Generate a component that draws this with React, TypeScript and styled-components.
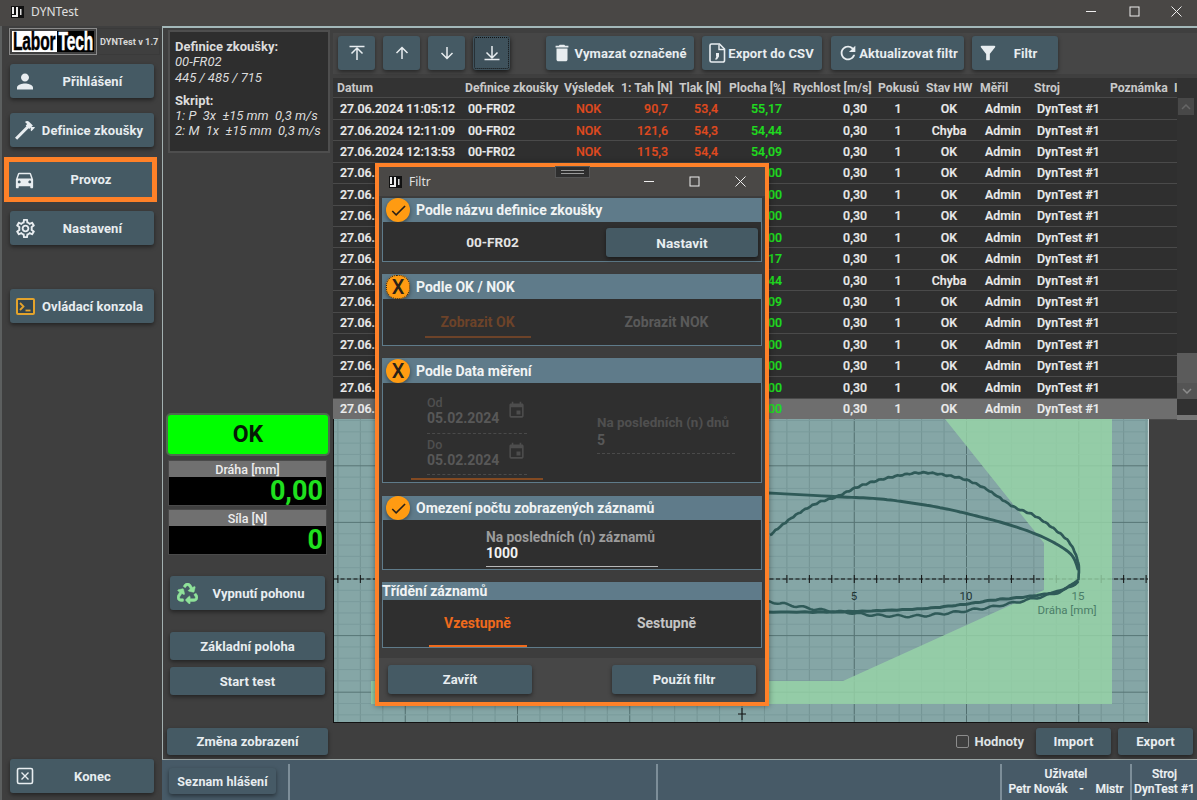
import React from "react";
import styled, { createGlobalStyle } from "styled-components";
import { MdPerson, MdDirectionsCar, MdOutlineSettings, MdDelete, MdRefresh, MdFilterAlt, MdEvent, MdCheck } from "react-icons/md";
import { FaRecycle } from "react-icons/fa";

const Global = createGlobalStyle`
  html, body { margin: 0; padding: 0; background: #3f3f3f; }
  * { box-sizing: border-box; }
  #root { width: 1197px; height: 800px; }
`;

const ORANGE = "#ff8128";
const FONT = `Roboto, "Liberation Sans", sans-serif`;

const Root = styled.div`
  position: relative; width: 1197px; height: 800px; overflow: hidden;
  display: flex; flex-direction: column; background: #3f3f3f;
  font-family: ${FONT}; color: #e6eaec;
`;
const TitleBar = styled.div`
  height: 26px; flex: none; display: flex; align-items: center; background: #494745;
  padding: 0 0 3px 11px;
`;
const TitleText = styled.span`
  font: 12px "Noto Sans", "Open Sans", sans-serif; color: #e0e0e0; margin-left: 7px;
`;
const WinControls = styled.div`margin-left: auto; display: flex; margin-right: -1px;`;
const DialogCtl = styled.div`margin-left: auto; display: flex; margin-right: 2px;`;
const WinBtn = styled.div<{ $w: number; $h: number }>`
  width: ${p => p.$w}px; height: ${p => p.$h}px; display: flex; align-items: center; justify-content: center;
`;
const Body = styled.div`flex: 1; display: flex; min-height: 0;`;
const Sidebar = styled.div`
  width: 162px; flex: none; display: flex; flex-direction: column; border-left: 2px solid #5c5f5f; padding-left: 8px;
`;
const LogoRow = styled.div`
  height: 27px; margin: 2px 0 9px -2px; width: 152px; display: flex; align-items: center;
  border: 1px solid #3a3a3a;
`;
const LogoBox = styled.div`
  display: flex; width: 88px; height: 27px; border: 1px solid #8a8a8a; padding: 2px; flex: none;
`;
const LogoPart = styled.div<{ $dark?: boolean }>`
  height: 100%; width: ${p => (p.$dark ? 37 : 45)}px; flex: none; display: flex; align-items: center; justify-content: center;
  background: ${p => (p.$dark ? "#000" : "#fff")}; color: ${p => (p.$dark ? "#fff" : "#000")};
`;
const LogoWord = styled.span`
  font: 700 25px "Liberation Sans", sans-serif; display: block; flex: none; width: max-content;
  transform: scaleX(0.62); letter-spacing: -0.2px; -webkit-text-stroke: 0.5px currentColor; white-space: nowrap;
`;
const Version = styled.span`font-size: 9.2px; font-weight: 700; color: #d8d8d8; margin-left: 3px; white-space: nowrap;`;

const Btn = styled.div<{ $w?: number; $h?: number }>`
  display: flex; align-items: center; justify-content: center; flex: none;
  width: ${p => (p.$w ? `${p.$w}px` : "auto")}; height: ${p => p.$h ?? 34}px;
  background: #455a64; border-radius: 3px; box-shadow: 0 2px 4px rgba(0, 0, 0, 0.45);
  font-size: 13px; font-weight: 700; color: #e8edf0; white-space: nowrap; letter-spacing: 0.1px;
`;
const NavBtn = styled(Btn)<{ $hl?: boolean }>`
  width: ${p => (p.$hl ? 143 : 144)}px; padding: 0 6px 0 3px; margin-bottom: 15px; justify-content: flex-start;
  ${p => p.$hl && `outline: 5px solid ${ORANGE}; margin-left: -1px; height: 35px; margin-bottom: 14px; box-shadow: none; border-radius: 0;`}
`;
const NavIcon = styled.span`width: 24px; height: 24px; display: flex; align-items: center; justify-content: center; flex: none;`;
const NavLabel = styled.span`flex: 1; text-align: center;`;
const NavSpacer = styled.div`height: 29px; flex: none;`;
const ExitBtn = styled(NavBtn)`margin-top: auto; margin-bottom: 7px;`;

const Workspace = styled.div`flex: 1; display: flex; flex-direction: column; min-width: 0;`;
const Main = styled.div`
  flex: 1; display: flex; min-height: 0; border-top: 2px solid #a3b8b9; border-left: 1px solid #a3b0b0; border-bottom: 1px solid #9aa5a5;
`;
const MiddleCol = styled.div`width: 170px; flex: none; display: flex; flex-direction: column;`;
const InfoPanel = styled.div`
  margin: 2px 0 0 5px; width: 162px; height: 123px; background: #2e2e2e; border: 2px solid #4e4e4e;
  padding: 7px 5px; font-size: 13px; line-height: 15.3px; color: #dcdcdc; flex: none;
`;
const InfoHead = styled.div<{ $gap?: boolean }>`font-weight: 700; margin-top: ${p => (p.$gap ? 8 : 0)}px;`;
const InfoLine = styled.div`font-style: italic; white-space: pre;`;
const StatusOk = styled.div`
  margin: 260px 0 0 3px; width: 164px; height: 43px; background: #00ff00; border: 2px solid #4f6b4f; border-radius: 5px;
  display: flex; align-items: center; justify-content: center; color: #061a06; font-size: 23px; font-weight: 700; flex: none;
`;
const Readout = styled.div<{ $mt: number }>`
  margin: ${p => p.$mt}px 0 0 5px; width: 159px; flex: none; border: 1px solid #4a4a4a;
`;
const ReadoutHead = styled.div`
  height: 16px; background: #707070; text-align: center; font-size: 12.5px; font-weight: 500; line-height: 17px; color: #eee;
`;
const ReadoutValue = styled.div`
  height: 28px; background: #000; color: #1fe01f; font-size: 27px; font-weight: 700; text-align: right; padding-right: 3px; line-height: 29px;
`;
const SideBtn = styled(Btn)<{ $mt: number; $ml?: number }>`
  margin: ${p => p.$mt}px 0 0 ${p => p.$ml ?? 7}px;
`;
const DriveBtn = styled(SideBtn)`padding-right: 6px; letter-spacing: 0;`;
const IconBtnLabel = styled.span`flex: 1; text-align: center;`;
const LeadIcon = styled.span<{ $pl?: number }>`display: flex; align-items: center; padding-left: ${p => p.$pl ?? 6}px; flex: none;`;

const RightCol = styled.div`flex: 1; display: flex; flex-direction: column; min-width: 0;`;
const Toolbar = styled.div`
  margin-top: 5px; height: 41px; flex: none; background: #464646; display: flex; padding: 3px 0 0 5px; gap: 8px;
`;
const SquareBtn = styled(Btn)<{ $focus?: boolean }>`
  width: 37px;
  ${p => p.$focus && `outline: 1px dotted #111; outline-offset: -2px; background: #3f525c; box-shadow: 0 2px 5px rgba(0,0,0,.7);`}
`;
const ToolBtn = styled(Btn)<{ $ml?: number }>`margin-left: ${p => p.$ml ?? 0}px; padding-right: 6px;`;
const TableWrap = styled.div`margin-top: 4px; display: flex; flex: none; height: 341px; background: #333;`;
const Table = styled.div`width: 844px; flex: none; display: flex; flex-direction: column;`;
const COLS = "128px 99px 57px 58px 50px 64px 85px 48px 54px 54px 76px 66px 1fr";
const HeadRow = styled.div`
  height: 20.4px; display: grid; grid-template-columns: ${COLS}; align-items: center; font-size: 12.2px; font-weight: 700; color: #c9c9c9;
  border-bottom: 1px solid #4a4a4a; white-space: nowrap; flex: none; padding-top: 1px;
`;
const HeadCell = styled.div`padding-left: 4px;`;
const HeadStub = styled.div`padding-left: 2px; overflow: visible;`;
const DataRow = styled.div<{ $sel?: boolean }>`
  height: 21.45px; flex: none; display: grid; grid-template-columns: ${COLS}; align-items: center; font-size: 12.4px; font-weight: 500;
  border-bottom: 1px solid #4a4a4a; white-space: nowrap; background: ${p => (p.$sel ? "#6e6e6e" : "#2f2f2f")}; color: #ececec;
  -webkit-text-stroke: 0.2px currentColor;
`;
const Cell = styled.div<{ $align?: string; $color?: string }>`
  text-align: ${p => p.$align ?? "left"}; color: ${p => p.$color ?? "inherit"};
  padding: 0 ${p => (p.$align === "right" ? 7 : 0)}px 0 ${p => (p.$align === "left" || !p.$align ? 7 : 0)}px;
`;
const EmptyCell = styled.div``;
const ScrollTrack = styled.div`flex: 1; display: flex; flex-direction: column; background: #313131; padding-top: 20px;`;
const ScrollUp = styled.div`height: 17px; background: #484848; display: flex; align-items: center; justify-content: center; flex: none; margin: 0 3px 0 1px;`;
const ScrollGap = styled.div`height: 238px; flex: none;`;
const ScrollThumb = styled.div`height: 30px; background: #5b5b5b; flex: none;`;
const ScrollDown = styled.div`height: 16px; background: #545454; display: flex; align-items: center; justify-content: center; flex: none;`;
const ScrollFoot = styled.div`margin-top: 16px; height: 5px; background: #777; flex: none;`;
const ChartRow = styled.div`height: 304px; flex: none; display: flex;`;
const ChartBox = styled.div`
  width: 816px; flex: none; border-left: 1px solid #111; border-bottom: 1px solid #111; border-right: 1px solid #c8d4d4; line-height: 0;
`;
const ChartText = styled.text<{ $faded?: boolean }>`
  font: 11.5px ${FONT}; fill: ${p => (p.$faded ? "#4b7d68" : "#1f3535")};
`;
const BottomBar = styled.div`
  flex: 1; display: flex; justify-content: flex-end; align-items: flex-start; padding: 5px 4px 0 0; gap: 7px;
`;
const CheckWrap = styled.div`display: flex; align-items: center; gap: 6px; height: 27px; margin-right: 5px; font-size: 13px; font-weight: 700; color: #dfe3e5;`;
const CheckBoxMark = styled.span`width: 13px; height: 13px; border: 1.5px solid #8c8c8c; border-radius: 2px; display: block;`;

const StatusBar = styled.div`
  height: 40px; flex: none; background: #475a67; display: flex; align-items: stretch; font-size: 12px; font-weight: 500; color: #eef2f4;
  -webkit-text-stroke: 0.2px currentColor;
`;
const StatusBtn = styled(Btn)`margin: 8px 0 0 7px; width: 107px; height: 26px; font-size: 12.5px; background: #465a66; -webkit-text-stroke: 0;`;
const StatusCell = styled.div<{ $w: number; $last?: boolean; $ml?: number }>`
  width: ${p => p.$w}px; flex: ${p => (p.$last ? 1 : "none")}; border-left: 2px solid #7d8e99; margin: 4px 0 0 ${p => p.$ml ?? 0}px;
  display: flex; flex-direction: column; align-items: center; justify-content: flex-start; line-height: 15px; padding-top: 2.5px; white-space: pre;
`;

const Dialog = styled.div`
  position: absolute; left: 375px; top: 163px; width: 394px; height: 543px; border: 4px solid ${ORANGE};
  background: #3d3d3d; display: flex; flex-direction: column; box-shadow: 0 0 6px rgba(0,0,0,.4);
`;
const DialogTitle = styled.div`
  height: 29px; flex: none; background: #4a4846; display: flex; align-items: center; padding-left: 10px;
`;
const Handle = styled.div`
  position: absolute; left: 176px; top: -1px; width: 35px; height: 12px; background: #2e2e2e; border: 1px solid #555;
  display: flex; flex-direction: column; gap: 2px; padding: 3px 5px 0;
`;
const HandleLine = styled.div`height: 1px; background: #9a9a9a;`;
const DialogBody = styled.div`flex: 1; display: flex; flex-direction: column; padding: 2px 3px 0;`;
const Section = styled.div<{ $mb?: number }>`margin-bottom: ${p => p.$mb ?? 12}px; flex: none;`;
const SectionHead = styled.div<{ $h: number }>`
  height: ${p => p.$h}px; background: #5f7b8a; display: flex; align-items: center; gap: 6px; padding-left: 4px;
  font-size: 14px; font-weight: 700; color: #f0f3f4; box-shadow: 0 1px 2px rgba(0,0,0,.2);
`;
const PlainHead = styled(SectionHead)`padding-left: 0;`;
const Toggle = styled.span<{ $focus?: boolean }>`
  width: 24px; height: 24px; border-radius: 50%; background: #ff9b12; color: #2a2118; flex: none; display: flex; align-items: center; justify-content: center;
  font-size: 20px; font-weight: 500; box-shadow: 0 2px 4px rgba(0,0,0,.4);
  ${p => p.$focus && `outline: 1px dotted #222; outline-offset: -1px; border-radius: 45%;`}
`;
const SectionBody = styled.div<{ $h: number }>`
  height: ${p => p.$h}px; background: #2f2f2f; border: 1px solid #5f7b8a; border-top: none; display: flex; position: relative;
`;
const NameValue = styled.div`
  flex: 1; display: flex; align-items: center; justify-content: center; font-size: 13.6px; font-weight: 700; color: #e4e4e4; padding-right: 4px;
`;
const SetBtn = styled(Btn)`margin: 6px 3px 0 0; font-size: 13.6px;`;
const Tab = styled.div<{ $color: string }>`
  width: 189px; position: relative; display: flex; justify-content: center; font-size: 14px; font-weight: 700; color: ${p => p.$color};
`;
const TabText = styled.div`height: 46px; display: flex; align-items: center;`;
const TabLine = styled.div<{ $color: string; $w: number; $bottom: number }>`
  position: absolute; left: 50%; margin-left: ${p => -p.$w / 2}px; bottom: ${p => p.$bottom}px;
  width: ${p => p.$w}px; height: 2px; background: ${p => p.$color};
`;
const DateCol = styled.div`width: 190px; flex: none; padding: 13px 0 0 44px; display: flex; flex-direction: column;`;
const Field = styled.div<{ $w: number; $h: number }>`
  width: ${p => p.$w}px; position: relative; height: ${p => p.$h}px; border-bottom: 1px dashed #4a4a4a; flex: none;
`;
const FieldLabel = styled.div<{ $color: string; $mt?: number; $strong?: boolean }>`
  font-size: ${p => (p.$strong ? 13.8 : 12.5)}px; line-height: 14px; font-weight: ${p => (p.$strong ? 700 : 500)}; color: ${p => p.$color}; white-space: nowrap;
  margin-top: ${p => p.$mt ?? 0}px;
`;
const WideLabel = styled(FieldLabel)`font-size: 13.4px; font-weight: 700;`;
const FieldValue = styled.div<{ $color: string; $mt?: number }>`
  font-size: 14px; line-height: 17px; font-weight: 700; color: ${p => p.$color}; margin-top: ${p => p.$mt ?? 0}px;
`;
const CalIcon = styled.span<{ $top: number }>`position: absolute; right: 1px; top: ${p => p.$top}px; color: #4d4d4d; display: flex;`;
const DateUnderline = styled.div`width: 132px; height: 2px; background: #834a22; margin: 3px 0 0 -16px; flex: none;`;
const RightField = styled.div`padding: 33px 0 0 24px;`;
const LimitField = styled.div`
  margin: 10px 0 0 103px; width: 172px; height: 37px; border-bottom: 1px solid #b8b8b8;
`;
const Footer = styled.div`
  height: 44px; margin: auto -3px 0; background: #474747; display: flex; justify-content: space-between; padding: 7px 9px 0; flex: none;
`;

function AppIcon() {
  return (
    <svg width="13" height="12" viewBox="0 0 13 12">
      <rect width="13" height="12" fill="#111" />
      <rect x="1" y="1" width="6" height="10" fill="#eee" />
      <rect x="3" y="1" width="2" height="7" fill="#111" />
      <rect x="1" y="8" width="4" height="1" fill="#111" />
      <rect x="9" y="3" width="1.5" height="6" fill="#ddd" />
    </svg>
  );
}
const Minus = () => <svg width="11" height="11" viewBox="0 0 11 11"><path d="M0 5.5H10" stroke="#eee" strokeWidth="1" /></svg>;
const Square = () => <svg width="11" height="11" viewBox="0 0 11 11"><rect x="1" y="1" width="9" height="9" fill="none" stroke="#eee" strokeWidth="1" /></svg>;
const Close = () => <svg width="11" height="11" viewBox="0 0 11 11"><path d="M.5.5L10.5 10.5M10.5.5L.5 10.5" stroke="#eee" strokeWidth="1" /></svg>;

const Hammer = () => (
  <svg width="24" height="24" viewBox="0 0 24 24" fill="#e8edf0">
    <path d="M2 19.63L13.43 8.2L12.72 7.5L14.14 6.07L12 3.89C13.2 2.7 15.09 2.7 16.27 3.89L19.87 7.5L18.45 8.91H21.29L22 9.62L18.45 13.21L17.74 12.5V9.62L16.27 11.04L15.56 10.33L4.13 21.76L2 19.63Z" />
  </svg>
);
const ExitIcon = () => (
  <svg width="18" height="18" viewBox="0 0 18 18" fill="none" stroke="#e8edf0">
    <rect x="1.5" y="1.5" width="15" height="15" rx="1.5" strokeWidth="1.6" />
    <path d="M5.5 5.5L12.5 12.5M12.5 5.5L5.5 12.5" strokeWidth="1.4" />
  </svg>
);
const ConsoleIcon = () => (
  <svg width="19" height="17" viewBox="0 0 19 17" fill="none">
    <rect x="1" y="1" width="17" height="15" rx="1" stroke="#e3a32c" strokeWidth="2" fill="#33454f" />
    <path d="M4 5L7.5 8.5L4 12" stroke="#e3a32c" strokeWidth="1.8" />
    <path d="M9.5 12.5H14.5" stroke="#e3a32c" strokeWidth="1.8" />
  </svg>
);
function ArrowIcon({ kind }: { kind: "top" | "up" | "down" | "bottom" }) {
  const st = { stroke: "#e8edf0", strokeWidth: 1.5, fill: "none" };
  return (
    <svg width="18" height="18" viewBox="0 0 18 18">
      {kind === "top" && <g {...st}><path d="M1.5 2.5H16.5" /><path d="M9 16V4M3.5 9.5L9 4L14.5 9.5" /></g>}
      {kind === "up" && <g {...st}><path d="M9 15V3.5M3.5 9L9 3.5L14.5 9" /></g>}
      {kind === "down" && <g {...st}><path d="M9 3V14.5M3.5 9L9 14.5L14.5 9" /></g>}
      {kind === "bottom" && <g {...st}><path d="M1.5 15.5H16.5" /><path d="M9 2V14M3.5 8.5L9 14L14.5 8.5" /></g>}
    </svg>
  );
}
const FileCsv = () => (
  <svg width="17" height="20" viewBox="0 0 17 20" fill="none">
    <path d="M2.5 1H10.5L15.5 6V17.5A1.5 1.5 0 0 1 14 19H2.5A1.5 1.5 0 0 1 1 17.5V2.5A1.5 1.5 0 0 1 2.5 1Z" stroke="#e8edf0" strokeWidth="1.6" />
    <path d="M10 1.5V6.5H15" stroke="#e8edf0" strokeWidth="1.4" />
    <path d="M7 10H10V13.5L8 16.5H6L7.5 13.5H7Z" fill="#e8edf0" />
  </svg>
);
const Chevron = ({ up }: { up?: boolean }) => (
  <svg width="10" height="6" viewBox="0 0 10 6"><path d={up ? "M1 5L5 1L9 5" : "M1 1L5 5L9 1"} fill="none" stroke={up ? "#666" : "#8c8c8c"} strokeWidth="1.5" /></svg>
);

type Pt = [number, number];
const z = (p: Pt): Pt => [760 + p[0] / 3, 400 + p[1] / 3];
function curve(zoomPts: Pt[], amp = 0, period = 20): string {
  const P = zoomPts.map(z);
  const out: string[] = [];
  let dist = 0;
  let prev: Pt | null = null;
  for (let i = 0; i < P.length - 1; i++) {
    const p0 = P[Math.max(0, i - 1)], p1 = P[i], p2 = P[i + 1], p3 = P[Math.min(P.length - 1, i + 2)];
    for (let s = 0; s < 10; s++) {
      const t = s / 10, t2 = t * t, t3 = t2 * t;
      const x = 0.5 * (2 * p1[0] + (p2[0] - p0[0]) * t + (2 * p0[0] - 5 * p1[0] + 4 * p2[0] - p3[0]) * t2 + (3 * p1[0] - p0[0] - 3 * p2[0] + p3[0]) * t3);
      const y = 0.5 * (2 * p1[1] + (p2[1] - p0[1]) * t + (2 * p0[1] - 5 * p1[1] + 4 * p2[1] - p3[1]) * t2 + (3 * p1[1] - p0[1] - 3 * p2[1] + p3[1]) * t3);
      if (prev) dist += Math.hypot(x - prev[0], y - prev[1]);
      prev = [x, y];
      const w = amp * Math.sin((dist / period) * Math.PI * 2);
      out.push(`${x.toFixed(1)},${(y + w).toFixed(1)}`);
    }
  }
  const last = P[P.length - 1];
  out.push(`${last[0]},${last[1]}`);
  return "M" + out.join("L");
}
const upperArc: Pt[] = [[30, 405], [100, 350], [170, 310], [230, 290], [290, 262], [350, 242], [420, 226], [490, 218], [560, 226], [620, 240], [680, 268], [760, 320], [820, 345], [880, 385], [930, 430], [955, 490], [955, 540]];
const returnArc: Pt[] = [[-10, 277], [230, 290], [350, 296], [450, 308], [550, 325], [650, 348], [750, 375], [850, 412], [930, 460], [955, 510]];
const lowerA: Pt[] = [[955, 540], [900, 572], [800, 590], [700, 600], [620, 612], [500, 625], [350, 632], [200, 636], [-10, 636]];
const lowerB: Pt[] = [[955, 545], [900, 575], [800, 600], [700, 620], [620, 632], [540, 642], [475, 648], [410, 648], [335, 645], [270, 638], [200, 632], [130, 622], [60, 610], [-10, 600]];

function Chart() {
  const X0 = 742, Y0 = 579, DX = 22.45, DY = 11.32;
  const vs = Array.from({ length: 37 }, (_, i) => i - 18);
  const hs = Array.from({ length: 28 }, (_, i) => i - 14);
  return (
    <svg width="814" height="303" viewBox="334 419 814 303">
      <rect x="334" y="419" width="814" height="303" fill="#85a6a6" />
      {vs.map(n => (
        <line key={n} x1={X0 + n * DX} x2={X0 + n * DX} y1="419" y2="723" stroke={n % 5 === 0 ? "#526f6f" : "#749494"} strokeWidth="1" />
      ))}
      {hs.map(k => (
        <line key={k} x1="334" x2="1148" y1={Y0 + k * DY} y2={Y0 + k * DY} stroke={k % 5 === 0 ? "#587676" : "#7a9b9c"} strokeWidth="1" />
      ))}
      <line x1="334" x2="1148" y1={Y0} y2={Y0} stroke="#111" strokeWidth="1" strokeDasharray="4 2.5" />
      {vs.map(n => (
        <line key={n} x1={X0 + n * DX} x2={X0 + n * DX} y1={Y0 - 4} y2={Y0 + 4} stroke="#111" strokeWidth="1" />
      ))}
      <path d="M738 714H746M742 708V720" stroke="#111" strokeWidth="1" />
      <ChartText x="854" y="600" textAnchor="middle">5</ChartText>
      <ChartText x="966" y="600" textAnchor="middle">10</ChartText>
      <path d="M945 419H1112V704H371V681H843L1044 590V543Z" fill="#97d4a7" fillOpacity="0.82" />
      <ChartText $faded x="1078" y="600" textAnchor="middle">15</ChartText>
      <ChartText $faded x="1067" y="614" textAnchor="middle">Dráha [mm]</ChartText>
      <g fill="none" stroke="#2f5a58" strokeLinejoin="round">
        <path d={curve(upperArc, 0.6, 9)} strokeWidth="2.7" />
        <path d={curve(returnArc)} strokeWidth="2.9" />
        <path d={curve(lowerA, 0.3, 14)} strokeWidth="3" />
        <path d={curve(lowerB, 1, 19)} strokeWidth="2.5" />
      </g>
    </svg>
  );
}

type RowData = { d: string; res?: string; tah?: string; tlak?: string; pl: string; hw: string; sel?: boolean; def?: string };
const RED = "#df4a1f", GREEN = "#1fdc1f";
const rows: RowData[] = [
  { d: "27.06.2024 11:05:12", def: "00-FR02", res: "NOK", tah: "90,7", tlak: "53,4", pl: "55,17", hw: "OK" },
  { d: "27.06.2024 12:11:09", def: "00-FR02", res: "NOK", tah: "121,6", tlak: "54,3", pl: "54,44", hw: "Chyba" },
  { d: "27.06.2024 12:13:53", def: "00-FR02", res: "NOK", tah: "115,3", tlak: "54,4", pl: "54,09", hw: "OK" },
  { d: "27.06.", pl: "00", hw: "OK" },
  { d: "27.06.", pl: "00", hw: "OK" },
  { d: "27.06.", pl: "00", hw: "OK" },
  { d: "27.06.", pl: "00", hw: "OK" },
  { d: "27.06.", pl: "17", hw: "OK" },
  { d: "27.06.", pl: "44", hw: "Chyba" },
  { d: "27.06.", pl: "09", hw: "OK" },
  { d: "27.06.", pl: "00", hw: "OK" },
  { d: "27.06.", pl: "00", hw: "OK" },
  { d: "27.06.", pl: "00", hw: "OK" },
  { d: "27.06.", pl: "00", hw: "OK" },
  { d: "27.06.", pl: "00", hw: "OK", sel: true },
];
const heads = ["Datum", "Definice zkoušky", "Výsledek", "1: Tah [N]", "Tlak [N]", "Plocha [%]", "Rychlost [m/s]", "Pokusů", "Stav HW", "Měřil", "Stroj", "Poznámka"];

export default function App() {
  return (
    <Root>
      <Global />
      <TitleBar>
        <AppIcon />
        <TitleText>DYNTest</TitleText>
        <WinControls>
          <WinBtn $w={42.5} $h={20}><Minus /></WinBtn>
          <WinBtn $w={42.5} $h={20}><Square /></WinBtn>
          <WinBtn $w={42.5} $h={20}><Close /></WinBtn>
        </WinControls>
      </TitleBar>
      <Body>
        <Sidebar>
          <LogoRow>
            <LogoBox>
              <LogoPart><LogoWord>Labor</LogoWord></LogoPart>
              <LogoPart $dark><LogoWord>Tech</LogoWord></LogoPart>
            </LogoBox>
            <Version>DYNTest v 1.7</Version>
          </LogoRow>
          <NavBtn><NavIcon><MdPerson size={25} /></NavIcon><NavLabel>Přihlášení</NavLabel></NavBtn>
          <NavBtn><NavIcon><Hammer /></NavIcon><NavLabel>Definice zkoušky</NavLabel></NavBtn>
          <NavBtn $hl><NavIcon><MdDirectionsCar size={23} /></NavIcon><NavLabel>Provoz</NavLabel></NavBtn>
          <NavBtn><NavIcon><MdOutlineSettings size={23} /></NavIcon><NavLabel>Nastavení</NavLabel></NavBtn>
          <NavSpacer />
          <NavBtn><NavIcon><ConsoleIcon /></NavIcon><NavLabel>Ovládací konzola</NavLabel></NavBtn>
          <ExitBtn><NavIcon><ExitIcon /></NavIcon><NavLabel>Konec</NavLabel></ExitBtn>
        </Sidebar>
        <Workspace>
          <Main>
            <MiddleCol>
              <InfoPanel>
                <InfoHead>Definice zkoušky:</InfoHead>
                <InfoLine>00-FR02</InfoLine>
                <InfoLine>445 / 485 / 715</InfoLine>
                <InfoHead $gap>Skript:</InfoHead>
                <InfoLine>1: P  3x  ±15 mm  0,3 m/s</InfoLine>
                <InfoLine>2: M  1x  ±15 mm  0,3 m/s</InfoLine>
              </InfoPanel>
              <StatusOk>OK</StatusOk>
              <Readout $mt={4}><ReadoutHead>Dráha [mm]</ReadoutHead><ReadoutValue>0,00</ReadoutValue></Readout>
              <Readout $mt={3}><ReadoutHead>Síla [N]</ReadoutHead><ReadoutValue>0</ReadoutValue></Readout>
              <DriveBtn $mt={21} $w={155}>
                <LeadIcon $pl={7}><FaRecycle size={21} color="#8fe29a" stroke="#8fe29a" strokeWidth={12} /></LeadIcon>
                <IconBtnLabel>Vypnutí pohonu</IconBtnLabel>
              </DriveBtn>
              <SideBtn $mt={22} $w={155} $h={28}>Základní poloha</SideBtn>
              <SideBtn $mt={7} $w={155} $h={28}>Start test</SideBtn>
              <SideBtn $mt={33} $ml={4} $w={161} $h={27}>Změna zobrazení</SideBtn>
            </MiddleCol>
            <RightCol>
              <Toolbar>
                <SquareBtn><ArrowIcon kind="top" /></SquareBtn>
                <SquareBtn><ArrowIcon kind="up" /></SquareBtn>
                <SquareBtn><ArrowIcon kind="down" /></SquareBtn>
                <SquareBtn $focus><ArrowIcon kind="bottom" /></SquareBtn>
                <ToolBtn $w={148} $ml={28}>
                  <LeadIcon $pl={5}><MdDelete size={22} /></LeadIcon>
                  <IconBtnLabel>Vymazat označené</IconBtnLabel>
                </ToolBtn>
                <ToolBtn $w={120}>
                  <LeadIcon $pl={7}><FileCsv /></LeadIcon>
                  <IconBtnLabel>Export do CSV</IconBtnLabel>
                </ToolBtn>
                <ToolBtn $w={133} $ml={1}>
                  <LeadIcon $pl={6}><MdRefresh size={22} /></LeadIcon>
                  <IconBtnLabel>Aktualizovat filtr</IconBtnLabel>
                </ToolBtn>
                <ToolBtn $w={86}>
                  <LeadIcon $pl={5}><MdFilterAlt size={22} /></LeadIcon>
                  <IconBtnLabel>Filtr</IconBtnLabel>
                </ToolBtn>
              </Toolbar>
              <TableWrap>
                <Table>
                  <HeadRow>
                    {heads.map(h => <HeadCell key={h}>{h}</HeadCell>)}
                    <HeadStub>I</HeadStub>
                  </HeadRow>
                  {rows.map((r, i) => (
                    <DataRow key={i} $sel={r.sel}>
                      <Cell>{r.d}</Cell>
                      <Cell>{r.def}</Cell>
                      <Cell $align="center" $color={RED}>{r.res}</Cell>
                      <Cell $align="right" $color={RED}>{r.tah}</Cell>
                      <Cell $align="right" $color={RED}>{r.tlak}</Cell>
                      <Cell $align="right" $color={GREEN}>{r.pl}</Cell>
                      <Cell $align="right">0,30</Cell>
                      <Cell $align="center">1</Cell>
                      <Cell $align="center">{r.hw}</Cell>
                      <Cell $align="center">Admin</Cell>
                      <Cell>DynTest #1</Cell>
                      <EmptyCell />
                      <EmptyCell />
                    </DataRow>
                  ))}
                </Table>
                <ScrollTrack>
                  <ScrollUp><Chevron up /></ScrollUp>
                  <ScrollGap />
                  <ScrollThumb />
                  <ScrollDown><Chevron /></ScrollDown>
                  <ScrollFoot />
                </ScrollTrack>
              </TableWrap>
              <ChartRow>
                <ChartBox><Chart /></ChartBox>
              </ChartRow>
              <BottomBar>
                <CheckWrap><CheckBoxMark />Hodnoty</CheckWrap>
                <Btn $w={75} $h={27}>Import</Btn>
                <Btn $w={75} $h={27}>Export</Btn>
              </BottomBar>
            </RightCol>
          </Main>
          <StatusBar>
            <StatusBtn>Seznam hlášení</StatusBtn>
            <StatusCell $w={368} $ml={12} />
            <StatusCell $w={344} />
            <StatusCell $w={130}>
              <span>Uživatel</span>
              <span>Petr Novák    -    Mistr</span>
            </StatusCell>
            <StatusCell $w={67} $last>
              <span>Stroj</span>
              <span>DynTest #1</span>
            </StatusCell>
          </StatusBar>
        </Workspace>
      </Body>
      <Dialog>
        <Handle><HandleLine /><HandleLine /></Handle>
        <DialogTitle>
          <AppIcon />
          <TitleText>Filtr</TitleText>
          <DialogCtl>
            <WinBtn $w={45.5} $h={29}><Minus /></WinBtn>
            <WinBtn $w={45.5} $h={29}><Square /></WinBtn>
            <WinBtn $w={45.5} $h={29}><Close /></WinBtn>
          </DialogCtl>
        </DialogTitle>
        <DialogBody>
          <Section>
            <SectionHead $h={24}><Toggle><MdCheck size={19} /></Toggle>Podle názvu definice zkoušky</SectionHead>
            <SectionBody $h={40}>
              <NameValue>00-FR02</NameValue>
              <SetBtn $w={152} $h={29}>Nastavit</SetBtn>
            </SectionBody>
          </Section>
          <Section>
            <SectionHead $h={25}><Toggle $focus>X</Toggle>Podle OK / NOK</SectionHead>
            <SectionBody $h={47}>
              <Tab $color="#6d4329"><TabText>Zobrazit OK</TabText><TabLine $w={106} $bottom={7} $color="#6d4329" /></Tab>
              <Tab $color="#5a5a5a"><TabText>Zobrazit NOK</TabText></Tab>
            </SectionBody>
          </Section>
          <Section $mb={13}>
            <SectionHead $h={25}><Toggle>X</Toggle>Podle Data měření</SectionHead>
            <SectionBody $h={100}>
              <DateCol>
                <Field $w={100} $h={38}>
                  <FieldLabel $color="#4f4f4f">Od</FieldLabel>
                  <FieldValue $color="#585858">05.02.2024</FieldValue>
                  <CalIcon $top={5}><MdEvent size={19} /></CalIcon>
                </Field>
                <Field $w={100} $h={41}>
                  <FieldLabel $color="#4f4f4f" $mt={4}>Do</FieldLabel>
                  <FieldValue $color="#585858">05.02.2024</FieldValue>
                  <CalIcon $top={8}><MdEvent size={19} /></CalIcon>
                </Field>
                <DateUnderline />
              </DateCol>
              <RightField>
                <Field $w={138} $h={38}>
                  <WideLabel $color="#4f4f4f">Na posledních (n) dnů</WideLabel>
                  <FieldValue $color="#585858" $mt={2}>5</FieldValue>
                </Field>
              </RightField>
            </SectionBody>
          </Section>
          <Section>
            <SectionHead $h={24}><Toggle><MdCheck size={19} /></Toggle>Omezení počtu zobrazených záznamů</SectionHead>
            <SectionBody $h={50}>
              <LimitField>
                <FieldLabel $color="#9c9c9c" $strong>Na posledních (n) záznamů</FieldLabel>
                <FieldValue $color="#f2f2f2" $mt={1}>1000</FieldValue>
              </LimitField>
            </SectionBody>
          </Section>
          <Section $mb={0}>
            <PlainHead $h={18}>Třídění záznamů</PlainHead>
            <SectionBody $h={48}>
              <Tab $color="#ef6a1c"><TabText>Vzestupně</TabText><TabLine $w={98} $bottom={0} $color="#ef6a1c" /></Tab>
              <Tab $color="#c4c4c4"><TabText>Sestupně</TabText></Tab>
            </SectionBody>
          </Section>
          <Footer>
            <Btn $w={144} $h={29}>Zavřít</Btn>
            <Btn $w={144} $h={29}>Použít filtr</Btn>
          </Footer>
        </DialogBody>
      </Dialog>
    </Root>
  );
}
